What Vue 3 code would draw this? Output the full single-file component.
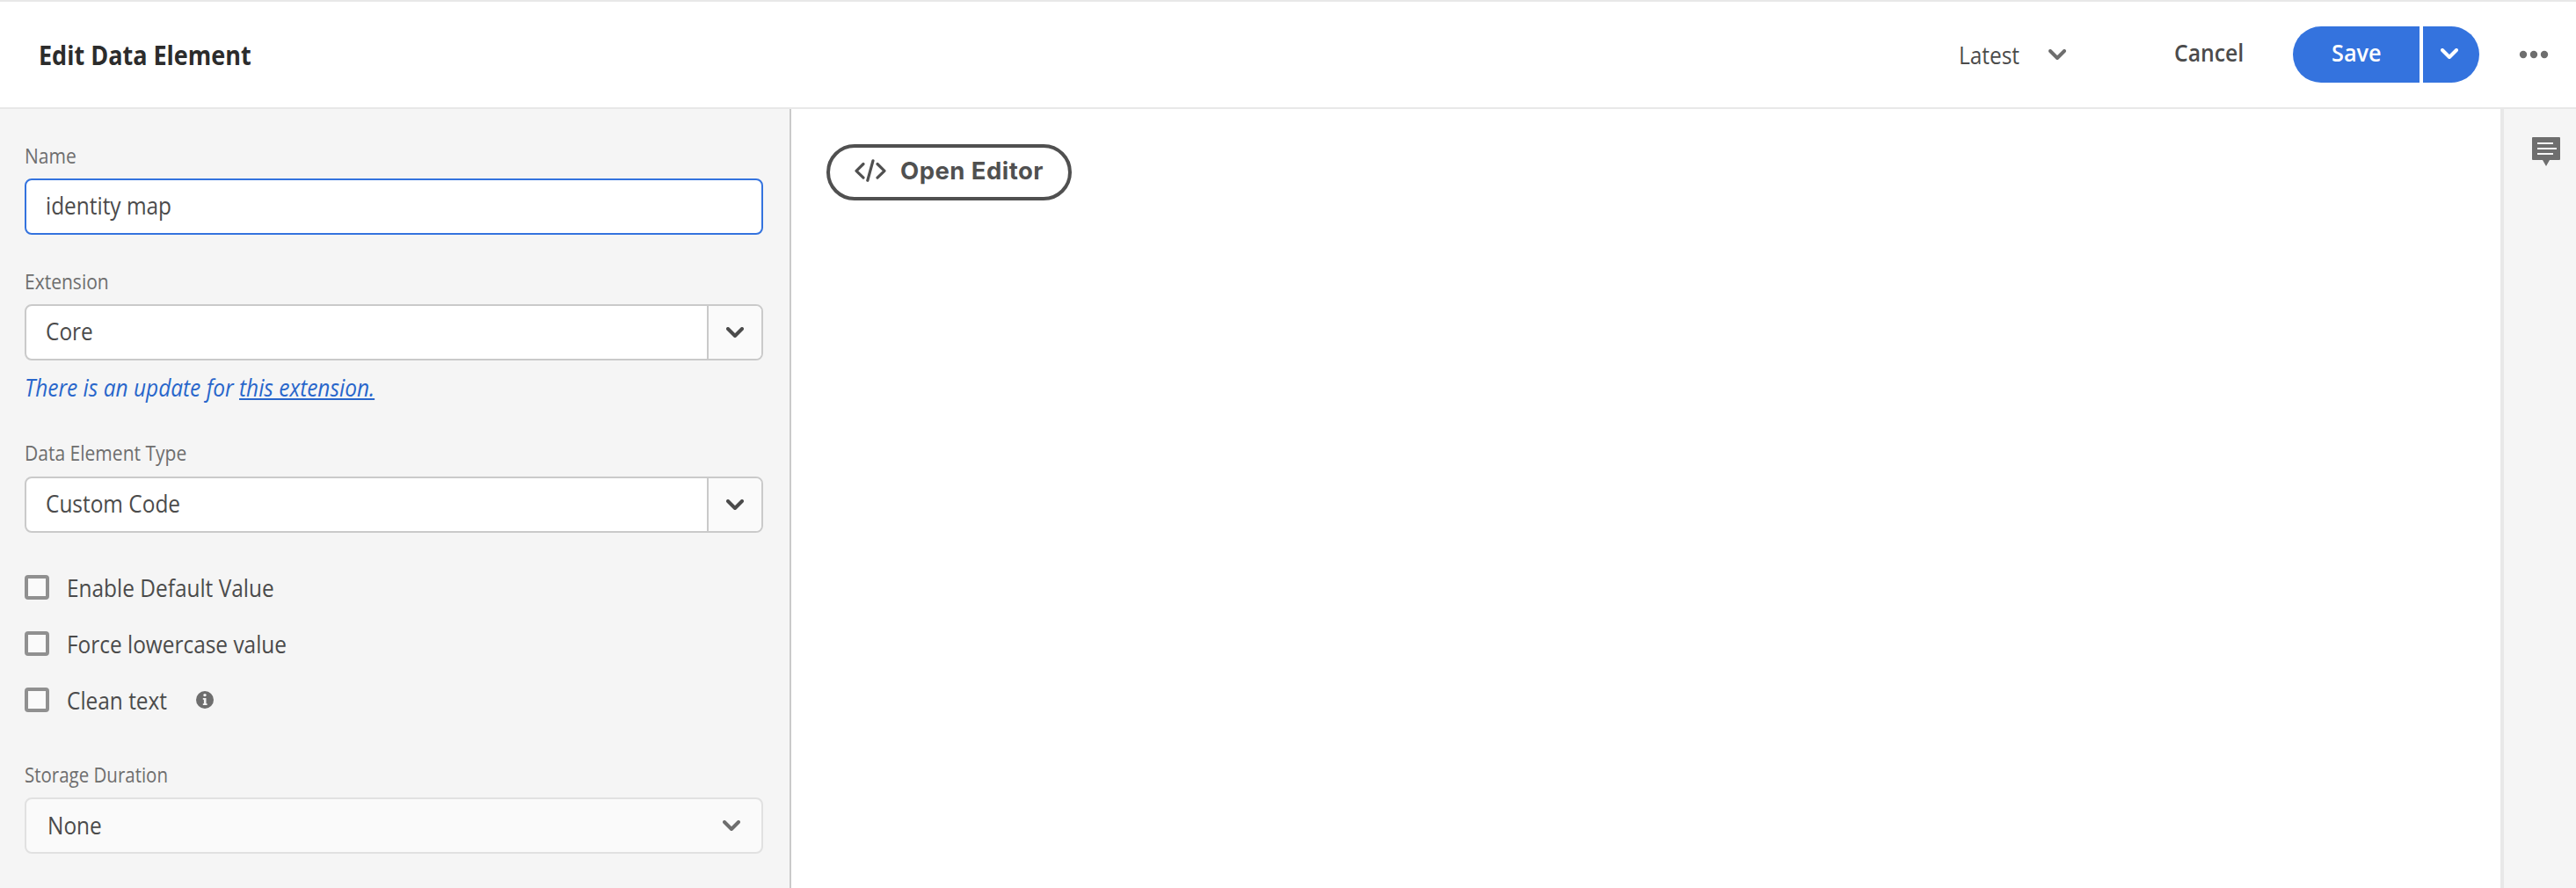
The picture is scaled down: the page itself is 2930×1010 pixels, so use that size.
<script setup>
import { ref } from 'vue'

const name = ref('identity map')
const options = [
  { label: 'Enable Default Value' },
  { label: 'Force lowercase value' },
  { label: 'Clean text', info: true },
]
</script>

<template>
  <div class="page">
    <header class="header">
      <h1 class="title"><span class="t">Edit Data Element</span></h1>
      <div class="actions">
        <div class="version">
          <span class="version-label"><span class="t">Latest</span></span>
          <svg class="chevron" viewBox="0 0 20 12"><path d="M2 2l8 8 8-8" /></svg>
        </div>
        <div class="cancel"><span class="t">Cancel</span></div>
        <div class="save-group">
          <button class="save"><span class="t">Save</span></button>
          <button class="save-more">
            <svg class="chevron" viewBox="0 0 20 12"><path d="M2 2l8 8 8-8" /></svg>
          </button>
        </div>
        <svg class="more" viewBox="0 0 34 10">
          <circle cx="5" cy="5" r="4.2" /><circle cx="17" cy="5" r="4.2" /><circle cx="29" cy="5" r="4.2" />
        </svg>
      </div>
    </header>

    <div class="body">
      <aside class="panel">
        <div class="label"><span class="t">Name</span></div>
        <div class="box focused"><span class="value"><span class="t">{{ name }}</span></span></div>

        <div class="label extension"><span class="t">Extension</span></div>
        <div class="box">
          <span class="value"><span class="t">Core</span></span>
          <span class="trigger"><svg class="chevron" viewBox="0 0 20 12"><path d="M2 2l8 8 8-8" /></svg></span>
        </div>
        <div class="notice"><span class="t">There is an update for <a>this extension.</a></span></div>

        <div class="label type"><span class="t">Data Element Type</span></div>
        <div class="box">
          <span class="value"><span class="t">Custom Code</span></span>
          <span class="trigger"><svg class="chevron" viewBox="0 0 20 12"><path d="M2 2l8 8 8-8" /></svg></span>
        </div>

        <div class="options">
          <div v-for="o in options" :key="o.label" class="option">
            <span class="check"></span>
            <span class="option-label"><span class="t">{{ o.label }}</span></span>
            <svg v-if="o.info" class="info" viewBox="0 0 20 20">
              <circle class="disc" cx="10" cy="10" r="10" />
              <circle cx="10" cy="4.6" r="1.7" />
              <path d="M7.8 8h3.7v6.3h1.1V16H7.8v-1.7h1.1V9.7H7.8z" />
            </svg>
          </div>
        </div>

        <div class="label storage"><span class="t">Storage Duration</span></div>
        <div class="box picker">
          <span class="value"><span class="t">None</span></span>
          <svg class="chevron" viewBox="0 0 20 12"><path d="M2 2l8 8 8-8" /></svg>
        </div>
      </aside>

      <main class="main">
        <button class="open">
          <svg class="code" viewBox="0 0 36 26">
            <path d="M10 5.5L2 13.3l8 7.8M26 5.5l8 7.8-8 7.8M21 1.8l-6.2 22.4" />
          </svg>
          <span>Open Editor</span>
        </button>
      </main>

      <aside class="rail">
        <svg class="comment" viewBox="0 0 32 34">
          <path d="M1 0h30a1 1 0 0 1 1 1v24a1 1 0 0 1-1 1H20l-4 7-4-7H1a1 1 0 0 1-1-1V1a1 1 0 0 1 1-1z" />
          <path class="lines" d="M6 7h18M6 13h22M6 19h18" />
        </svg>
      </aside>
    </div>
  </div>
</template>

<style>
body {
  margin: 0;
}
</style>

<style scoped>
.page {
  width: 2930px;
  height: 1010px;
  display: flex;
  flex-direction: column;
  overflow: hidden;
  background: #fff;
  color: #4b4b4b;
  font-family: "Open Sans", "Noto Sans", sans-serif;
  font-size: 26.6px;
  font-weight: 440;
  line-height: 36px;
}
.page * {
  box-sizing: border-box;
}
.t {
  display: inline-block;
  white-space: nowrap;
  transform: scaleX(0.918);
  transform-origin: 0 50%;
}
button {
  margin: 0;
  padding: 0;
  border: 0;
  background: none;
  font: inherit;
  color: inherit;
}
svg {
  display: block;
  flex: none;
}
.chevron {
  width: 20px;
  height: 12px;
  fill: none;
  stroke: currentColor;
  stroke-width: 4;
  stroke-linecap: round;
  stroke-linejoin: round;
}
.header {
  height: 124px;
  flex: none;
  display: flex;
  align-items: center;
  justify-content: space-between;
  padding-left: 44px;
  border-top: 2px solid #e8e8e8;
  border-bottom: 2px solid #e8e8e8;
}
.title {
  margin: 0;
  padding-top: 1px;
  font-size: 29.8px;
  font-weight: 700;
  color: #2c2c2c;
}
.title .t {
  transform: scaleX(0.906);
}
.actions {
  display: flex;
  align-items: center;
  padding-right: 31px;
}
.version {
  width: 246px;
  display: flex;
  align-items: center;
}
.version-label {
  width: 103px;
  padding: 1px 0 0 1px;
}
.version .chevron {
  color: #6e6e6e;
}
.cancel {
  width: 135px;
  padding-bottom: 4px;
  font-weight: 600;
}
.cancel .t {
  transform: scaleX(0.93);
}
.save-group {
  display: flex;
  gap: 4px;
  margin-right: 45px;
  color: #fff;
}
.save {
  width: 144px;
  height: 64px;
  padding: 0 0 4px 44px;
  text-align: left;
  font-weight: 600;
  background: #3473de;
  border-radius: 32px 0 0 32px;
}
.save .t {
  transform: scaleX(0.95);
}
.save-more {
  width: 64px;
  height: 64px;
  padding: 0 0 2px 20px;
  background: #3473de;
  border-radius: 0 32px 32px 0;
}
.more {
  width: 34px;
  height: 10px;
  fill: #6e6e6e;
}
.body {
  flex: 1;
  display: flex;
}
.panel {
  width: 900px;
  padding: 38px 30px 0 28px;
  background: #f5f5f5;
  border-right: 2px solid #cacaca;
}
.label {
  height: 30px;
  line-height: 30px;
  margin-bottom: 11px;
  font-size: 23px;
  color: #6e6e6e;
}
.label .t {
  transform: scaleX(0.914);
}
.label.extension {
  margin-top: 38px;
}
.label.type {
  margin-top: 41px;
  margin-bottom: 12px;
}
.label.storage {
  margin-top: 52px;
}
.label.storage .t {
  transform: scaleX(0.89);
}
.box {
  width: 840px;
  height: 64px;
  display: flex;
  align-items: center;
  overflow: hidden;
  background: #fff;
  border: 2px solid #cacaca;
  border-radius: 8px;
}
.box.focused {
  border-color: #3473de;
}
.value {
  flex: 1;
  padding: 0 0 2px 22px;
}
.trigger {
  width: 62px;
  height: 60px;
  display: flex;
  align-items: center;
  padding: 0 0 0 20px;
  background: #fafafa;
  border-left: 2px solid #cacaca;
}
.notice {
  height: 36px;
  margin-top: 13px;
  font-style: italic;
  color: #2866cb;
}
.notice .t {
  transform: scaleX(0.919);
}
.notice a {
  text-decoration: underline;
  text-decoration-thickness: 2px;
  text-underline-offset: 2px;
  text-decoration-skip-ink: none;
}
.options {
  display: flex;
  flex-direction: column;
  gap: 28px;
  margin-top: 44px;
}
.option {
  height: 36px;
  display: flex;
  align-items: center;
}
.option-label {
  margin: 1px 0 0 20px;
}
.check {
  width: 28px;
  height: 28px;
  border: 4px solid #909090;
  border-radius: 4px;
  background: #fafafa;
}
.info {
  width: 20px;
  height: 20px;
  margin-left: 23px;
  fill: #f5f5f5;
}
.info .disc {
  fill: #6e6e6e;
}
.picker {
  background: #fafafa;
  border-color: #e1e1e1;
}
.picker .value {
  padding: 0 0 0 24px;
}
.picker .chevron {
  margin-right: 24px;
  color: #6e6e6e;
}
.main {
  flex: 1;
  padding: 40px;
}
.open {
  width: 279px;
  height: 64px;
  display: flex;
  align-items: center;
  gap: 16px;
  padding: 0 0 4px 28px;
  border: 4px solid #505050;
  border-radius: 32px;
  font-family: Inter, sans-serif;
  font-size: 27.5px;
  font-weight: 700;
  letter-spacing: 0.45px;
  white-space: nowrap;
  color: #505050;
}
.code {
  width: 36px;
  height: 26px;
  fill: none;
  stroke: currentColor;
  stroke-width: 3.2;
  stroke-linecap: round;
  stroke-linejoin: round;
}
.rail {
  width: 86px;
  padding: 32px 0 0 32px;
  background: #f5f5f5;
  border-left: 4px solid #e8e8e8;
}
.comment {
  width: 32px;
  height: 34px;
  fill: #6e6e6e;
}
.lines {
  stroke: #f5f5f5;
  stroke-width: 2;
}
</style>
